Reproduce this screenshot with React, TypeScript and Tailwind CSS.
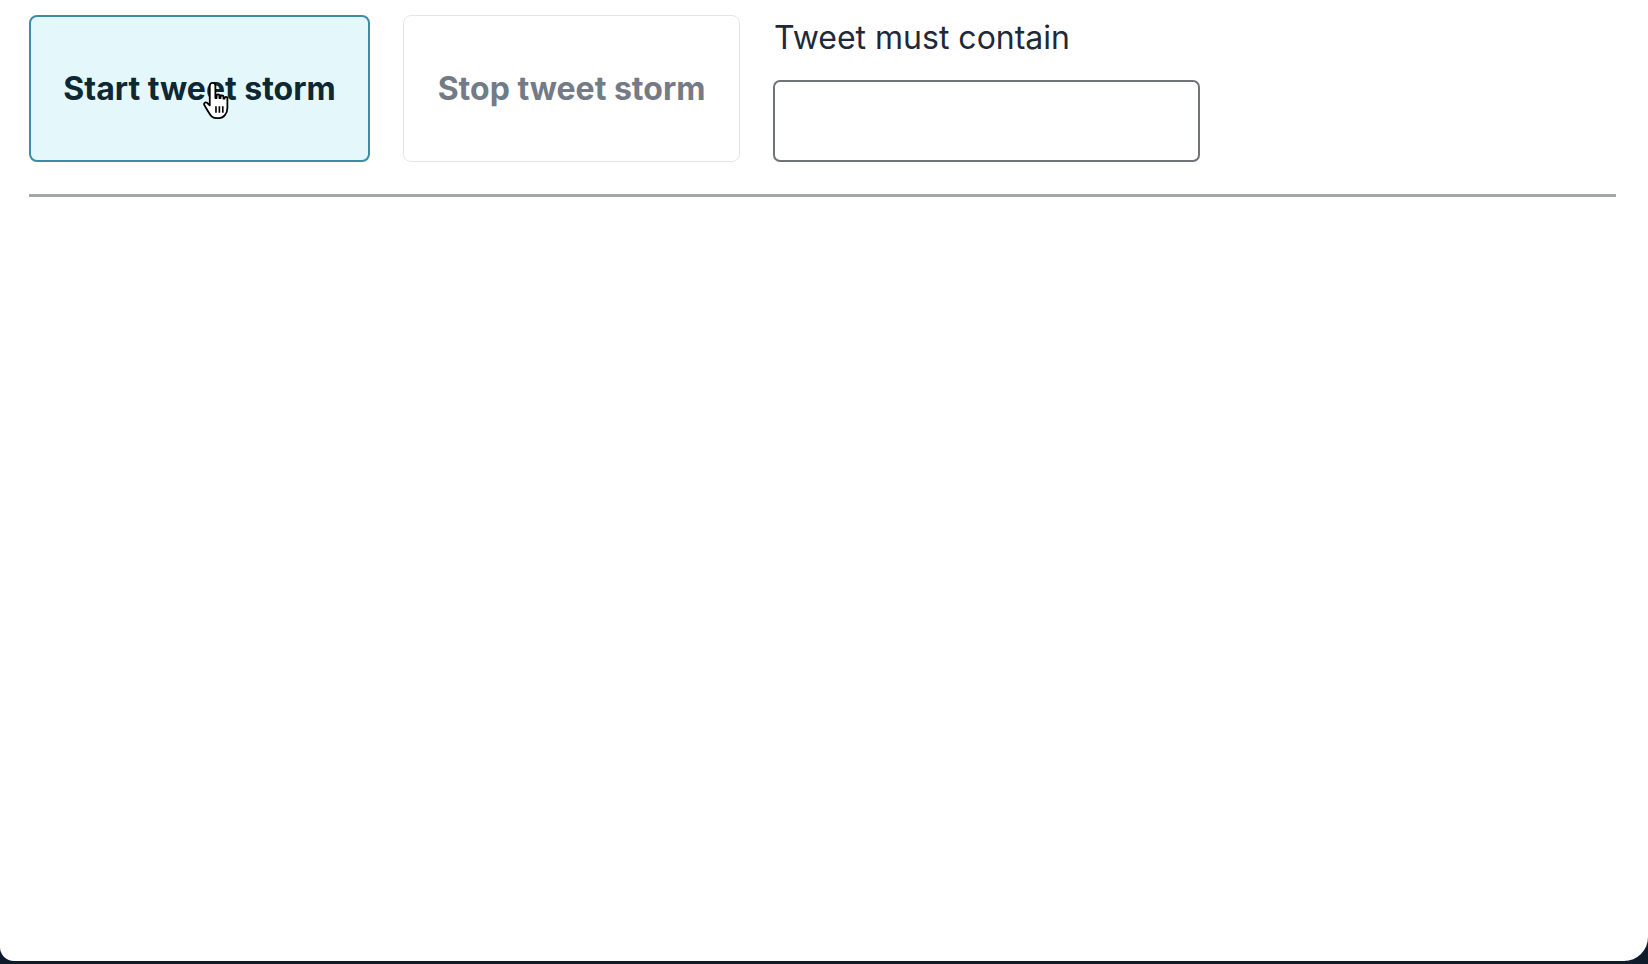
import React from "react";

function HandCursor() {
  return (
    <svg
      width="33"
      height="40"
      viewBox="0 0 22 27"
      className="absolute left-[202px] top-[81px] pointer-events-none"
    >
      <path
        d="M7 1.2c1.1 0 1.9.9 1.9 2v8.3h.8V9.8c0-1 1.9-1 1.9 0v1.7h.8v-1c0-1 1.9-1 1.9 0v1.4h.8v-.5c0-1 1.9-1 1.9 0v6.8c0 3.8-2.6 6.8-5.6 6.8H9.3c-2.6 0-3.6-1.6-5.3-4.4L1.4 16.2c-.6-1 .6-2.4 1.9-1.5l1.8 1.8V3.2c0-1.1.8-2 1.9-2z"
        fill="#fff"
        stroke="#000"
        strokeWidth="1.2"
        strokeLinejoin="round"
      />
      <path d="M9.3 17v4.4M11.6 17v4.4M13.9 17v4.4" stroke="#000" strokeWidth="1.1" />
    </svg>
  );
}

export default function App() {
  return (
    <div className="h-[964px] w-full bg-[#0d1b2a]" style={{ fontFamily: "Inter, 'Noto Sans', sans-serif" }}>
      <div className="relative h-[961px] w-full bg-white rounded-bl-[14px] rounded-br-[24px] pl-[29px] pr-[32px] pt-[15px]">
        <div className="flex items-end gap-[33px]">
          <button className="w-[341px] h-[147px] rounded-[8px] border-2 border-[#3b8da6] bg-[#e4f8fb] text-[32px] font-bold text-[#0d2833]">
            Start tweet storm
          </button>
          <button className="w-[337px] h-[147px] rounded-[8px] border border-[#e3e6ee] bg-white text-[32px] font-bold text-[#737b86]">
            Stop tweet storm
          </button>
          <div className="flex flex-col">
            <label className="text-[32px] leading-[40px] text-[#1f2937] ml-[1px]">Tweet must contain</label>
            <input
              type="text"
              className="mt-[22px] w-[427px] h-[82px] rounded-[7px] border-2 border-[#6f737a] bg-white outline-none"
            />
          </div>
        </div>
        <div className="mt-[32px] h-[3px] bg-[#a5a7ab]" />
        <HandCursor />
      </div>
    </div>
  );
}
